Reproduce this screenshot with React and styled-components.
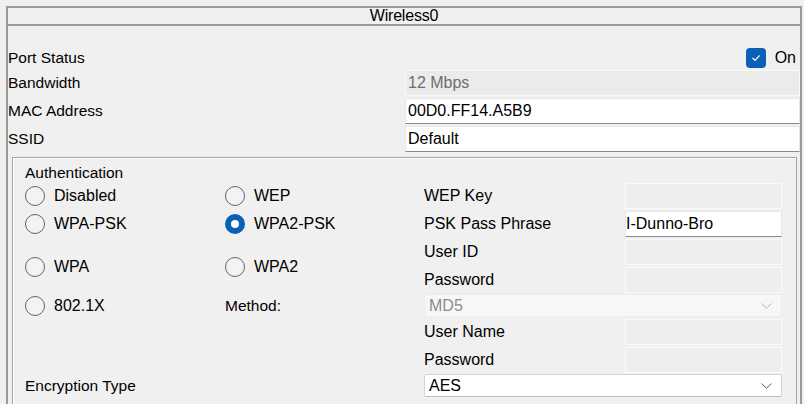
import React from "react";
import styled, { createGlobalStyle } from "styled-components";

const Global = createGlobalStyle`
  html, body { margin: 0; padding: 0; background: #f0f0f0; overflow: hidden; }
  body { font-family: "Liberation Sans", Arial, sans-serif; color: #000; }
  * { box-sizing: border-box; }
`;

const Panel = styled.div`
  margin: 6px 0 0 6px;
  width: 796px;
  height: 398px;
  overflow: hidden;
  border: 2px solid #9a9a9a;
  border-bottom: none;
  background: #f0f0f0;
`;

const TitleBar = styled.div`
  height: 18px;
  border-bottom: 2px solid #9a9a9a;
  text-align: center;
  font-size: 16px;
  line-height: 16px;
  letter-spacing: -0.2px;
`;

const Body = styled.div`
  padding-top: 22px;
`;

const TopGrid = styled.div`
  display: grid;
  grid-template-columns: 397px 1fr;
  grid-template-rows: 20px repeat(3, 26px);
  row-gap: 2px;
`;

const TopLabel = styled.div`
  align-self: center;
  font-size: 15.5px;
  line-height: 18px;
  white-space: nowrap;
`;

const ToggleCell = styled.div`
  display: flex;
  align-items: center;
  justify-content: flex-end;
  gap: 9px;
  padding-right: 4px;
  font-size: 16px;
`;

const CheckBox = styled.span`
  width: 20px;
  height: 20px;
  border-radius: 4px;
  background: #0a5fb6;
  display: flex;
  align-items: center;
  justify-content: center;
`;

const Field = styled.div`
  width: 100%;
  height: 26px;
  display: flex;
  align-items: center;
  padding-left: ${(p) => (p.$pad != null ? p.$pad : 2)}px;
  font-size: 16px;
  white-space: nowrap;
  background: ${(p) =>
    p.$variant === "edit" ? "#ffffff" : p.$variant === "readonly" ? "#ebebeb" : "#eeeeee"};
  color: ${(p) => (p.$variant === "readonly" ? "#6e6e6e" : "#000")};
  border: 1px solid ${(p) => (p.$variant === "edit" ? "#e6e6e6" : "#fafafa")};
  border-bottom-color: ${(p) => (p.$variant === "edit" ? "#8a8a8a" : "#fafafa")};
`;

const GroupBox = styled.div`
  margin: 5px 3px 0 4px;
  padding: 5px 14px 20px 12px;
  border: 1px solid #a3a3a3;
  box-shadow: inset 1px 1px 0 #ffffff;
`;

const GroupTitle = styled.div`
  height: 20px;
  font-size: 15.5px;
  line-height: 20px;
`;

const AuthGrid = styled.div`
  display: grid;
  grid-template-columns: 200px 199px 201px 157px;
  grid-template-rows: 28px 28px 28px 27px 25px 28px 27px 24px;
`;

const Cell = styled.div`
  grid-column: ${(p) => p.$col} / span ${(p) => p.$cspan || 1};
  grid-row: ${(p) => p.$row} / span ${(p) => p.$rspan || 1};
  height: ${(p) => (p.$rspan ? "auto" : `${p.$h || 26}px`)};
  align-self: ${(p) => (p.$rspan ? "center" : "start")};
  display: flex;
  align-items: center;
  min-width: 0;
`;

const RadioWrap = styled.div`
  display: flex;
  align-items: center;
  gap: 9px;
  font-size: 16px;
  line-height: 20px;
`;

const RadioCircle = styled.span`
  width: 20px;
  height: 20px;
  border-radius: 50%;
  flex: none;
  display: flex;
  align-items: center;
  justify-content: center;
  border: ${(p) => (p.$on ? "none" : "1px solid #636363")};
  background: ${(p) => (p.$on ? "#0a5fb6" : "#f3f3f3")};
`;

const Dot = styled.span`
  width: 8px;
  height: 8px;
  border-radius: 50%;
  background: #fff;
`;

const SideLabel = styled.span`
  font-size: ${(p) => (p.$small ? 15.5 : 16)}px;
  white-space: nowrap;
`;

const Select = styled.div`
  width: 100%;
  height: 23px;
  display: flex;
  align-items: center;
  justify-content: space-between;
  padding: 0 9px 0 4px;
  font-size: 16px;
  border: 1px solid ${(p) => (p.$disabled ? "#ececec" : "#d4d4d4")};
  border-bottom-color: ${(p) => (p.$disabled ? "#ececec" : "#bdbdbd")};
  border-radius: 2px;
  background: ${(p) => (p.$disabled ? "#f7f7f7" : "#ffffff")};
  color: ${(p) => (p.$disabled ? "#8c8c8c" : "#000")};
`;

function Chevron({ color }) {
  return (
    <svg width="11" height="6" viewBox="0 0 11 6">
      <polyline points="0.5,0.5 5.5,5.2 10.5,0.5" fill="none" stroke={color} strokeWidth="1" />
    </svg>
  );
}

function Radio({ label, on }) {
  return (
    <RadioWrap>
      <RadioCircle $on={on}>{on && <Dot />}</RadioCircle>
      <span>{label}</span>
    </RadioWrap>
  );
}

export default function App() {
  return (
    <>
      <Global />
      <Panel>
        <TitleBar>Wireless0</TitleBar>
        <Body>
          <TopGrid>
            <TopLabel>Port Status</TopLabel>
            <ToggleCell>
              <CheckBox>
                <svg width="12" height="10" viewBox="0 0 12 10">
                  <polyline points="2.5,5 5,7.5 9.5,2.5" fill="none" stroke="#fff" strokeWidth="1.2" />
                </svg>
              </CheckBox>
              <span>On</span>
            </ToggleCell>
            <TopLabel>Bandwidth</TopLabel>
            <Field $variant="readonly">12 Mbps</Field>
            <TopLabel>MAC Address</TopLabel>
            <Field $variant="edit">00D0.FF14.A5B9</Field>
            <TopLabel>SSID</TopLabel>
            <Field $variant="edit">Default</Field>
          </TopGrid>

          <GroupBox>
            <GroupTitle>Authentication</GroupTitle>
            <AuthGrid>
              <Cell $col={1} $row={1}><Radio label="Disabled" /></Cell>
              <Cell $col={2} $row={1}><Radio label="WEP" /></Cell>
              <Cell $col={3} $row={1}><SideLabel>WEP Key</SideLabel></Cell>
              <Cell $col={4} $row={1}><Field /></Cell>

              <Cell $col={1} $row={2}><Radio label="WPA-PSK" /></Cell>
              <Cell $col={2} $row={2}><Radio label="WPA2-PSK" on /></Cell>
              <Cell $col={3} $row={2}><SideLabel>PSK Pass Phrase</SideLabel></Cell>
              <Cell $col={4} $row={2}><Field $variant="edit" $pad={0}>I-Dunno-Bro</Field></Cell>

              <Cell $col={1} $row={3} $rspan={2}><Radio label="WPA" /></Cell>
              <Cell $col={2} $row={3} $rspan={2}><Radio label="WPA2" /></Cell>
              <Cell $col={3} $row={3}><SideLabel>User ID</SideLabel></Cell>
              <Cell $col={4} $row={3}><Field /></Cell>
              <Cell $col={3} $row={4}><SideLabel>Password</SideLabel></Cell>
              <Cell $col={4} $row={4}><Field /></Cell>

              <Cell $col={1} $row={5} $h={23}><Radio label="802.1X" /></Cell>
              <Cell $col={2} $row={5} $h={23}><SideLabel $small>Method:</SideLabel></Cell>
              <Cell $col={3} $cspan={2} $row={5} $h={23}>
                <Select $disabled>
                  <span>MD5</span>
                  <Chevron color="#b4b4b4" />
                </Select>
              </Cell>

              <Cell $col={3} $row={6}><SideLabel>User Name</SideLabel></Cell>
              <Cell $col={4} $row={6}><Field /></Cell>
              <Cell $col={3} $row={7}><SideLabel>Password</SideLabel></Cell>
              <Cell $col={4} $row={7}><Field /></Cell>

              <Cell $col={1} $row={8} $h={23}><SideLabel $small>Encryption Type</SideLabel></Cell>
              <Cell $col={3} $cspan={2} $row={8} $h={23}>
                <Select>
                  <span>AES</span>
                  <Chevron color="#555" />
                </Select>
              </Cell>
            </AuthGrid>
          </GroupBox>
        </Body>
      </Panel>
    </>
  );
}
